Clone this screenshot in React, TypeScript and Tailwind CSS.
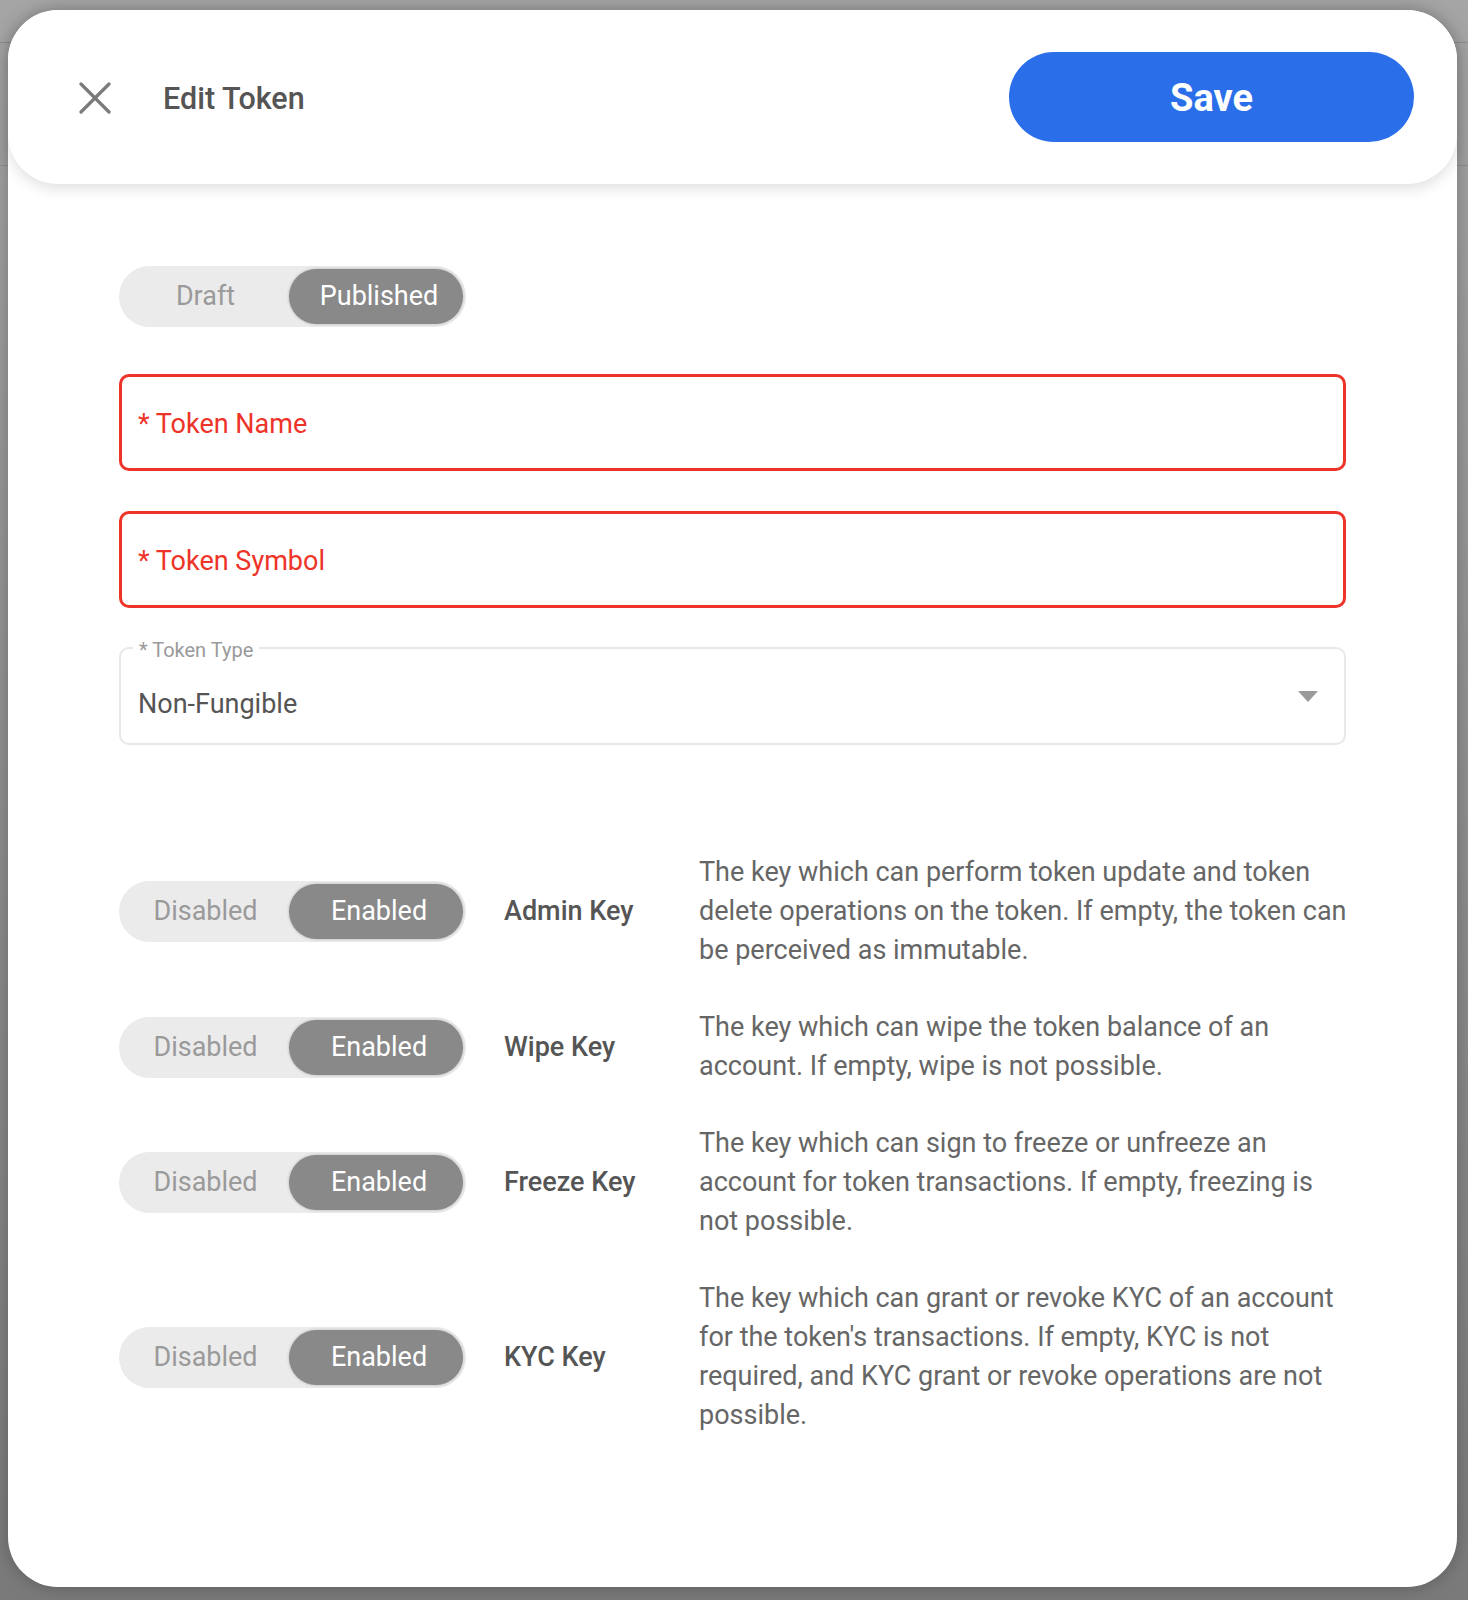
import React from 'react';

type KeyRow = {
    label: string;
    lines: string[];
};

const KEY_ROWS: KeyRow[] = [
    {
        label: 'Admin Key',
        lines: [
            'The key which can perform token update and token',
            'delete operations on the token. If empty, the token can',
            'be perceived as immutable.',
        ],
    },
    {
        label: 'Wipe Key',
        lines: ['The key which can wipe the token balance of an', 'account. If empty, wipe is not possible.'],
    },
    {
        label: 'Freeze Key',
        lines: [
            'The key which can sign to freeze or unfreeze an',
            'account for token transactions. If empty, freezing is',
            'not possible.',
        ],
    },
    {
        label: 'KYC Key',
        lines: [
            "The key which can grant or revoke KYC of an account",
            "for the token's transactions. If empty, KYC is not",
            'required, and KYC grant or revoke operations are not',
            'possible.',
        ],
    },
];

function Segmented({ off, on }: { off: string; on: string }) {
    return (
        <div className="flex h-[61px] w-[347px] shrink-0 rounded-full bg-[#ebebeb] p-[3px] text-[27px]">
            <div className="flex w-[167px] items-center justify-center text-[#9a9a9a]">{off}</div>
            <div className="flex flex-1 items-center justify-center rounded-full bg-[#898989] pl-[6px] text-white shadow-[0_0_3px_rgba(0,0,0,0.25)]">
                {on}
            </div>
        </div>
    );
}

function RequiredInput({ label }: { label: string }) {
    return (
        <div className="flex h-[97px] items-center rounded-[10px] border-[3px] border-[#ee3328] pl-[16px] pt-[3px] text-[27px] text-[#ee3328]">
            * {label}
        </div>
    );
}

export default function App() {
    return (
        <div className="relative h-[1600px] w-[1468px] overflow-hidden bg-gradient-to-b from-[#a5a5a5] to-[#7a7a7a] font-['Roboto',sans-serif]">
            {/* page behind the overlay */}
            <div className="h-[42px]" />
            <div className="h-[124px] border-y border-[#8e8e8e]" />

            {/* modal */}
            <div className="absolute left-[8px] top-[10px] flex h-[1577px] w-[1449px] flex-col rounded-[50px] bg-white shadow-[0_0_18px_rgba(0,0,0,0.25)]">
                {/* header */}
                <div className="flex h-[174px] shrink-0 items-center rounded-[50px] bg-white pl-[71px] pr-[43px] shadow-[0_5px_14px_rgba(0,0,0,0.12)]">
                    <svg width="32" height="32" viewBox="0 0 32 32" className="mt-[2px] shrink-0">
                        <path d="M2 2 L30 30 M30 2 L2 30" stroke="#7a7a7a" strokeWidth="3.2" strokeLinecap="round" />
                    </svg>
                    <h1 className="ml-[52px] pt-[4px] text-[30.5px] font-medium text-[#555555]">Edit Token</h1>
                    <button className="ml-auto h-[90px] w-[405px] rounded-full bg-[#2a6fe9] pt-[2px] text-[38px] font-bold text-white">
                        Save
                    </button>
                </div>

                {/* body */}
                <div className="flex flex-col px-[111px] pt-[82px]">
                    <Segmented off="Draft" on="Published" />

                    <div className="mt-[47px] flex flex-col gap-[40px]">
                        <RequiredInput label="Token Name" />
                        <RequiredInput label="Token Symbol" />
                    </div>

                    {/* token type select */}
                    <div className="relative mt-[39px] flex h-[98px] items-center rounded-[10px] border-2 border-[#e8e8e8] pl-[17px] pr-[26px] pt-[17px]">
                        <span className="absolute -top-[14px] left-[12px] bg-white px-[6px] text-[20px] text-[#9a9a9a]">
                            * Token Type
                        </span>
                        <span className="text-[27px] text-[#555555]">Non-Fungible</span>
                        <svg width="20" height="11" viewBox="0 0 20 11" className="ml-auto -mt-[17px]">
                            <path d="M0 0 L20 0 L10 11 Z" fill="#9a9a9a" />
                        </svg>
                    </div>

                    {/* keys */}
                    <div className="mt-[108px] flex flex-col gap-[38px]">
                        {KEY_ROWS.map((row) => (
                            <div key={row.label} className="flex items-center">
                                <Segmented off="Disabled" on="Enabled" />
                                <div className="ml-[38px] w-[195px] shrink-0 text-[27px] font-medium text-[#555555]">
                                    {row.label}
                                </div>
                                <p className="whitespace-nowrap text-[27px] leading-[39px] text-[#666666]">
                                    {row.lines.map((line, i) => (
                                        <React.Fragment key={i}>
                                            {line}
                                            {i < row.lines.length - 1 && <br />}
                                        </React.Fragment>
                                    ))}
                                </p>
                            </div>
                        ))}
                    </div>
                </div>
            </div>
        </div>
    );
}
